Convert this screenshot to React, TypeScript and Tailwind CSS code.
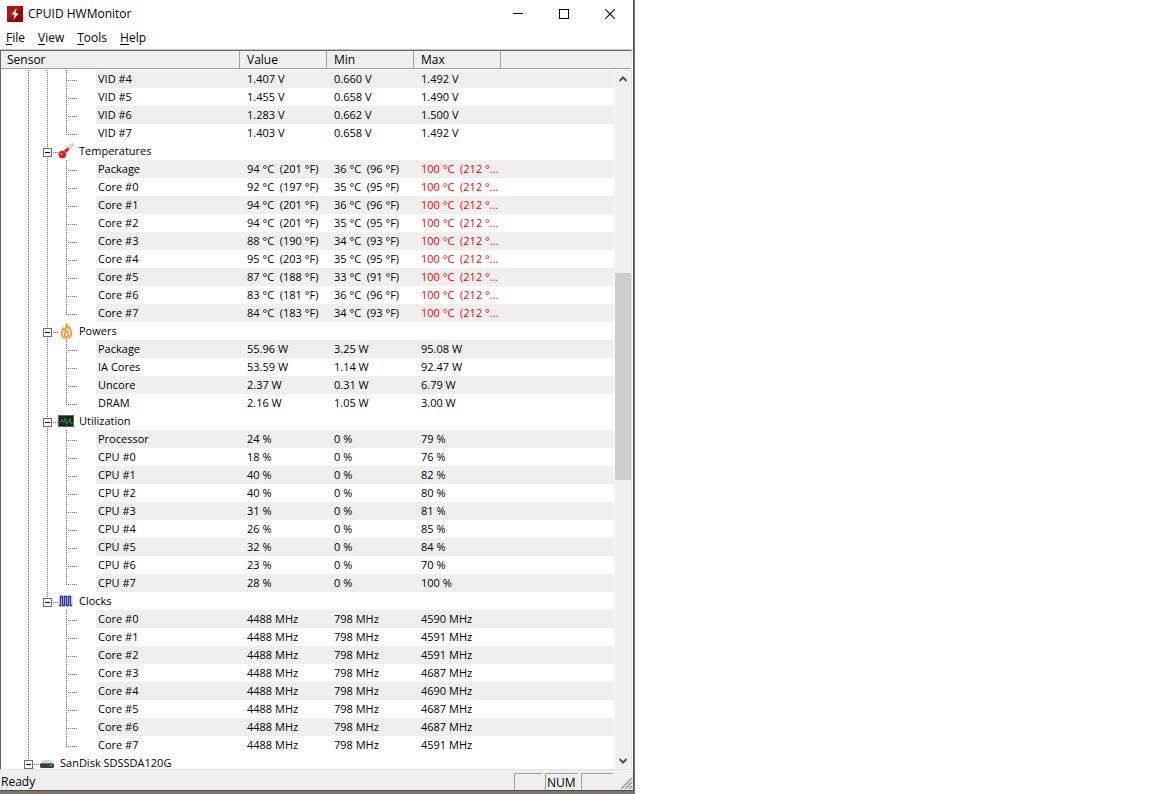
import { useState } from 'react';
import type { ReactNode } from 'react';

type Reading = [name: string, value: string, min: string, max: string];

type Group = {
  name: string;
  icon?: ReactNode;
  hot?: boolean;
  last?: boolean;
  rows: Reading[];
};

const ThermometerIcon = () => (
  <svg width="16" height="18" viewBox="0 0 16 18">
    <path d="M6 10.5L14 3" stroke="#c4c4c4" strokeWidth="3.6" strokeLinecap="round" />
    <path d="M6 10.5L14 3" stroke="#e2e2e2" strokeWidth="1.8" strokeLinecap="round" />
    <path d="M4 12.5L10.5 6.5" stroke="#f01111" strokeWidth="2.6" />
    <circle cx="4.3" cy="12.6" r="4" fill="#cf9a9a" />
    <circle cx="4.3" cy="12.4" r="3.5" fill="#f01515" />
    <circle cx="3.4" cy="12" r="1.1" fill="#ffa8a8" />
  </svg>
);

const FlameIcon = () => (
  <svg width="16" height="18" viewBox="0 0 16 18">
    <path
      d="M8.5 1.5C9.5 4 9 5 10 6.5L11.5 5C11.5 7 13.5 8.5 13.5 11.5C13.5 14.5 11.5 16.3 8.5 16.3C5.5 16.3 3.5 14.5 3.5 11.5C3.5 9 5 8 5 6C6 6.5 6.3 7.2 6.5 8C8 6 8.7 4 8.5 1.5Z"
      fill="#ffe3b0"
      stroke="#fb8a1e"
      strokeWidth="1.3"
    />
    <path d="M8.5 8.5C8.7 10 10.5 10.8 10.5 12.6A2 2 0 0 1 6.5 12.6C6.5 11 8 10.3 8.5 8.5Z" fill="#fff" stroke="#f5861f" strokeWidth="1.2" />
  </svg>
);

const GraphIcon = () => (
  <svg width="16" height="18" viewBox="0 0 16 18">
    <rect x="0.5" y="3.5" width="15" height="11" fill="#1c1f1d" stroke="#5f6562" />
    <path d="M1 10H3L4 7L6 11L7 6L9 12L10 9L11 10L12 6L13 12L15 11" fill="none" stroke="#15952f" />
  </svg>
);

const ClockIcon = () => (
  <svg width="16" height="18" viewBox="0 0 16 18">
    <rect x="1" y="3" width="14" height="12" fill="#e2e6f5" />
    <path d="M1 13.5H2.5V4.5H4.5V13.5H6.5V4.5H8.5V13.5H10.5V4.5H12.5V13.5H14" fill="none" stroke="#2c3a9c" strokeWidth="1.4" />
  </svg>
);

const DriveIcon = () => (
  <svg width="16" height="18" viewBox="0 0 16 18">
    <path d="M4 6H12L14.5 10H1.5Z" fill="#d3d5d6" />
    <rect x="1" y="9" width="14" height="5" rx="1.5" fill="#3c4043" />
    <path d="M2 9.5H14" stroke="#777c80" />
    <rect x="11" y="11" width="2" height="1" fill="#4be04b" />
  </svg>
);

const groups: Group[] = [
  {
    name: 'Voltages',
    rows: [
      ['VID #4', '1.407 V', '0.660 V', '1.492 V'],
      ['VID #5', '1.455 V', '0.658 V', '1.490 V'],
      ['VID #6', '1.283 V', '0.662 V', '1.500 V'],
      ['VID #7', '1.403 V', '0.658 V', '1.492 V'],
    ],
  },
  {
    name: 'Temperatures',
    icon: <ThermometerIcon />,
    hot: true,
    rows: [
      ['Package', '94 °C  (201 °F)', '36 °C  (96 °F)', '100 °C  (212 °...'],
      ['Core #0', '92 °C  (197 °F)', '35 °C  (95 °F)', '100 °C  (212 °...'],
      ['Core #1', '94 °C  (201 °F)', '36 °C  (96 °F)', '100 °C  (212 °...'],
      ['Core #2', '94 °C  (201 °F)', '35 °C  (95 °F)', '100 °C  (212 °...'],
      ['Core #3', '88 °C  (190 °F)', '34 °C  (93 °F)', '100 °C  (212 °...'],
      ['Core #4', '95 °C  (203 °F)', '35 °C  (95 °F)', '100 °C  (212 °...'],
      ['Core #5', '87 °C  (188 °F)', '33 °C  (91 °F)', '100 °C  (212 °...'],
      ['Core #6', '83 °C  (181 °F)', '36 °C  (96 °F)', '100 °C  (212 °...'],
      ['Core #7', '84 °C  (183 °F)', '34 °C  (93 °F)', '100 °C  (212 °...'],
    ],
  },
  {
    name: 'Powers',
    icon: <FlameIcon />,
    rows: [
      ['Package', '55.96 W', '3.25 W', '95.08 W'],
      ['IA Cores', '53.59 W', '1.14 W', '92.47 W'],
      ['Uncore', '2.37 W', '0.31 W', '6.79 W'],
      ['DRAM', '2.16 W', '1.05 W', '3.00 W'],
    ],
  },
  {
    name: 'Utilization',
    icon: <GraphIcon />,
    rows: [
      ['Processor', '24 %', '0 %', '79 %'],
      ['CPU #0', '18 %', '0 %', '76 %'],
      ['CPU #1', '40 %', '0 %', '82 %'],
      ['CPU #2', '40 %', '0 %', '80 %'],
      ['CPU #3', '31 %', '0 %', '81 %'],
      ['CPU #4', '26 %', '0 %', '85 %'],
      ['CPU #5', '32 %', '0 %', '84 %'],
      ['CPU #6', '23 %', '0 %', '70 %'],
      ['CPU #7', '28 %', '0 %', '100 %'],
    ],
  },
  {
    name: 'Clocks',
    icon: <ClockIcon />,
    last: true,
    rows: [
      ['Core #0', '4488 MHz', '798 MHz', '4590 MHz'],
      ['Core #1', '4488 MHz', '798 MHz', '4591 MHz'],
      ['Core #2', '4488 MHz', '798 MHz', '4591 MHz'],
      ['Core #3', '4488 MHz', '798 MHz', '4687 MHz'],
      ['Core #4', '4488 MHz', '798 MHz', '4690 MHz'],
      ['Core #5', '4488 MHz', '798 MHz', '4687 MHz'],
      ['Core #6', '4488 MHz', '798 MHz', '4687 MHz'],
      ['Core #7', '4488 MHz', '798 MHz', '4591 MHz'],
    ],
  },
];

// dotted connector lines of the tree, 18px per row
function Dots({ width, d }: { width: number; d: string }) {
  return (
    <svg width={width} height="18" viewBox={`0 0 ${width} 18`} className="shrink-0" shapeRendering="crispEdges">
      <path d={d} fill="none" stroke="#6d6d6d" strokeDasharray="1 1" />
    </svg>
  );
}

function Toggle({ name, open, last, onClick }: { name: string; open: boolean; last?: boolean; onClick?: () => void }) {
  return (
    <button type="button" aria-label={name} aria-expanded={open} onClick={onClick} className="block shrink-0">
      <svg width="9" height="18" viewBox="0 0 9 18" shapeRendering="crispEdges">
        <path d={last ? 'M4.5 0V6' : 'M4.5 0V6M4.5 16V18'} stroke="#6d6d6d" strokeDasharray="1 1" />
        <rect x="0.5" y="6.5" width="8" height="8" fill="#fff" stroke="#6d6d6d" />
        <path d={open ? 'M2 10.5H7' : 'M2 10.5H7M4.5 8V13'} stroke="#000" />
      </svg>
    </button>
  );
}

function GroupRows({ group }: { group: Group }) {
  const [open, setOpen] = useState(true);
  const trunk = group.last ? 'M27.5 0V18' : 'M27.5 0V18M46.5 0V18';

  return (
    <>
      {group.icon && (
        <tr className="h-[18px]">
          <td colSpan={5} className="p-0">
            <div className="flex h-[18px] items-center">
              <Dots width={42} d="M27.5 0V18" />
              <Toggle name={group.name} open={open} last={group.last} onClick={() => setOpen(!open)} />
              <Dots width={6} d="M1 10.5H6" />
              {group.icon}
              <span className="pl-[5px]">{group.name}</span>
            </div>
          </td>
        </tr>
      )}
      {open &&
        group.rows.map(([name, value, min, max], i) => {
          const shade = i % 2 === 0 ? 'bg-[#efefef]' : '';
          const end = i === group.rows.length - 1 ? 11 : 18;
          return (
            <tr key={name} className="h-[18px]">
              <td className="p-0">
                <div className="flex h-[18px]">
                  <Dots width={95} d={`${trunk}M65.5 0V${end}M67 10.5H76`} />
                  <span className={`grow pl-0.5 ${shade}`}>{name}</span>
                </div>
              </td>
              <td className={`p-0 pl-[7px] ${shade}`}>{value}</td>
              <td className={`p-0 pl-[7px] ${shade}`}>{min}</td>
              <td className={`p-0 pl-[7px] ${shade} ${group.hot ? 'text-[#ff0000]' : ''}`}>{max}</td>
              <td className={`p-0 ${shade}`} />
            </tr>
          );
        })}
    </>
  );
}

function TitleBar() {
  return (
    <header className="flex h-7 items-center">
      <svg width="16" height="16" viewBox="0 0 16 16" className="mr-[5px] ml-[7px]">
        <rect width="16" height="16" fill="#8f0808" />
        <path d="M0 16V0H16" fill="#b81414" />
        <path d="M9.5 2L4.5 8.5H7.5L6.5 14L11.5 7.3H8.5Z" fill="#fff" />
      </svg>
      <h1 className="grow text-xs">CPUID HWMonitor</h1>
      <button type="button" aria-label="Minimize" className="flex h-[26px] w-[46px] items-center justify-center">
        <svg width="10" height="10" viewBox="0 0 10 10" shapeRendering="crispEdges">
          <path d="M0 4.5H10" stroke="#000" />
        </svg>
      </button>
      <button type="button" aria-label="Maximize" className="flex h-[26px] w-[46px] items-center justify-center">
        <svg width="10" height="10" viewBox="0 0 10 10" shapeRendering="crispEdges">
          <rect x="0.5" y="0.5" width="9" height="9" fill="none" stroke="#000" />
        </svg>
      </button>
      <button type="button" aria-label="Close" className="flex h-[26px] w-[46px] items-center justify-center">
        <svg width="10" height="10" viewBox="0 0 10 10">
          <path d="M0 0L10 10M10 0L0 10" stroke="#000" strokeWidth="1.1" />
        </svg>
      </button>
    </header>
  );
}

function Scrollbar() {
  return (
    <div className="absolute top-[19px] right-0 bottom-0 flex w-[17px] flex-col border-l border-white bg-[#efefef]">
      <button type="button" aria-label="Scroll up" className="flex h-[18px] items-center justify-center">
        <svg width="8" height="6" viewBox="0 0 8 6">
          <path d="M0.5 5L4 1.5L7.5 5" fill="none" stroke="#555" strokeWidth="2" />
        </svg>
      </button>
      <div className="grow-[185]" />
      <div className="grow-[207] bg-[#cdcdcd]" />
      <div className="grow-[273]" />
      <button type="button" aria-label="Scroll down" className="flex h-4 items-center justify-center">
        <svg width="8" height="6" viewBox="0 0 8 6">
          <path d="M0.5 1L4 4.5L7.5 1" fill="none" stroke="#555" strokeWidth="2" />
        </svg>
      </button>
    </div>
  );
}

const menus = ['File', 'View', 'Tools', 'Help'];
const columns = ['Sensor', 'Value', 'Min', 'Max', ''];

export default function App() {
  return (
    <div className="min-h-screen bg-white font-['Open_Sans','Noto_Sans',sans-serif] text-[11px] leading-[18px] text-black">
      <div className="flex h-screen w-full max-w-[635px] flex-col bg-[#7b756b] pr-px pb-[3px]">
        <div className="flex min-h-0 grow flex-col border-r border-b border-[#4a4a46] bg-white">
          <TitleBar />
          <nav className="flex h-[22px] items-center gap-[13px] border-b border-[#c4c4c4] pl-1.5 text-xs">
            {menus.map((menu) => (
              <button type="button" key={menu}>
                <span className="underline underline-offset-2">{menu[0]}</span>
                {menu.slice(1)}
              </button>
            ))}
          </nav>

          <main className="relative mr-px min-h-0 grow overflow-hidden border border-t-[#696969] border-r-[#e3e3e3] border-b-[#e3e3e3] border-l-[#696969]">
            <table className="w-full table-fixed border-separate border-spacing-0 whitespace-pre">
              <colgroup>
                <col className="w-[239px]" />
                <col className="w-[87px]" />
                <col className="w-[87px]" />
                <col className="w-[87px]" />
                <col />
              </colgroup>
              <thead>
                <tr className="h-[18px] bg-[#efefef] text-xs leading-[16px]">
                  {columns.map((column, i) => (
                    <th
                      key={i}
                      className={`border-b border-b-[#a0a0a0] p-0 pt-px text-left font-normal ${i < 4 ? 'border-r border-r-[#a0a0a0]' : ''} ${i === 0 ? 'pl-1.5' : 'pl-[7px]'}`}
                    >
                      {column}
                    </th>
                  ))}
                </tr>
              </thead>
              <tbody className="before:block before:h-px before:content-['']">
                {groups.map((group) => (
                  <GroupRows key={group.name} group={group} />
                ))}
                <tr className="h-[18px]">
                  <td colSpan={5} className="p-0">
                    <div className="flex h-[18px] items-center">
                      <span className="w-[23px]" />
                      <Toggle name="SanDisk SDSSDA120G" open />
                      <Dots width={6} d="M1 10.5H6" />
                      <DriveIcon />
                      <span className="pl-[5px]">SanDisk SDSSDA120G</span>
                    </div>
                  </td>
                </tr>
              </tbody>
            </table>
            <Scrollbar />
          </main>

          <footer className="flex h-5 items-end bg-[#efefef] pl-px text-xs">
            <span className="grow leading-[17px]">Ready</span>
            <span className="h-[17px] w-7 border-t border-l border-[#a0a0a0]" />
            <span className="ml-[3px] h-[17px] w-[33px] border-t border-l border-[#a0a0a0] pl-px leading-[17px]">NUM</span>
            <span className="ml-[3px] h-[17px] w-8 border-t border-l border-[#a0a0a0]" />
            <svg width="20" height="14" viewBox="0 0 20 14">
              <path d="M8 13L19 2M12 13L19 6M16 13L19 10" stroke="#999" strokeWidth="1.5" />
            </svg>
          </footer>
        </div>
      </div>
    </div>
  );
}
